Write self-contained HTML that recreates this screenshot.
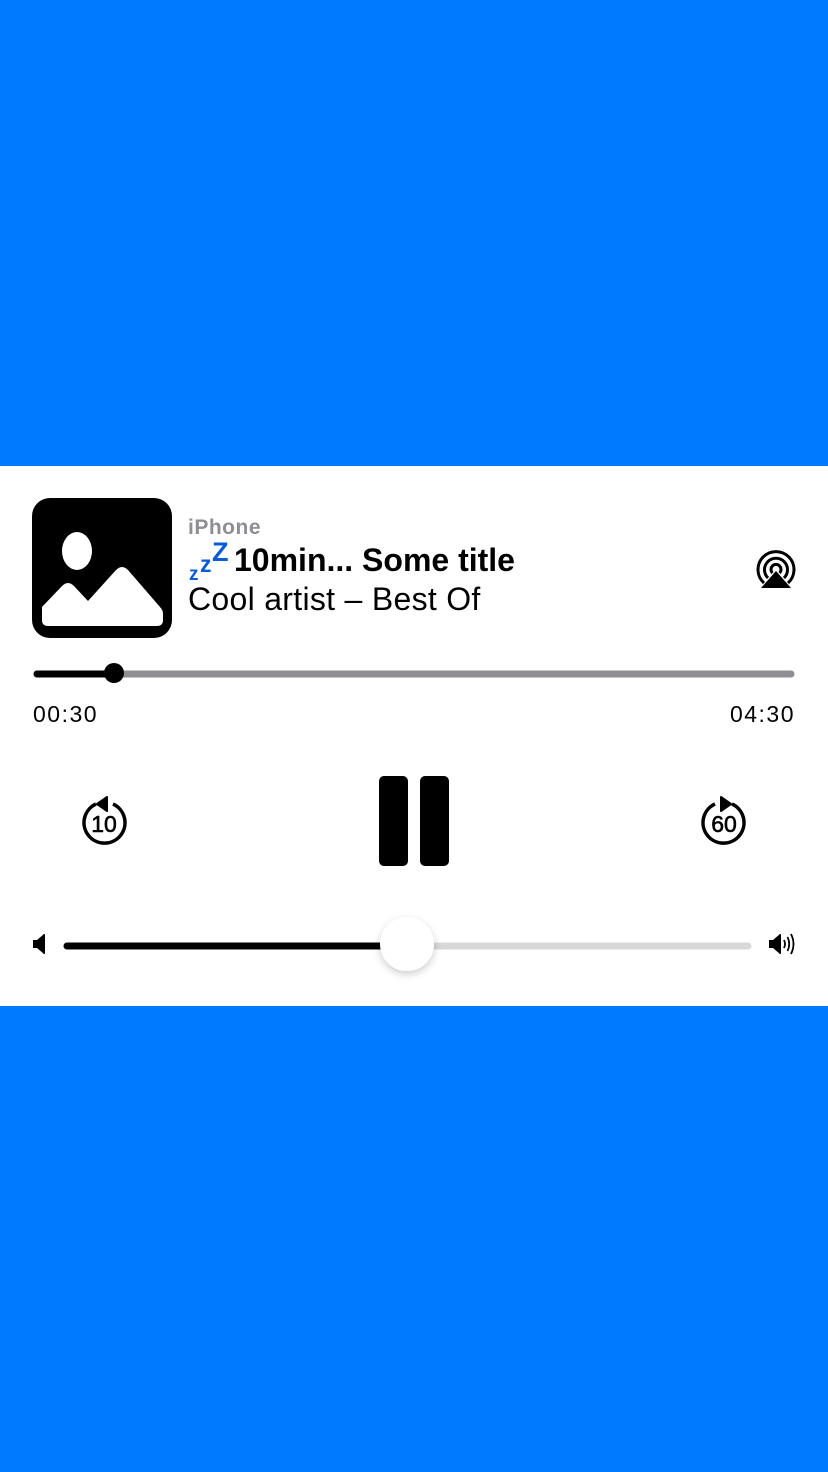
<!DOCTYPE html>
<html><head><meta charset="utf-8"><style>
html,body{margin:0;padding:0}
body{width:828px;height:1472px;background:#007aff;position:relative;overflow:hidden;font-family:"Liberation Sans",sans-serif}
.card{position:absolute;left:0;top:466px;width:828px;height:540px;background:#fff}
.t{position:absolute;white-space:nowrap}
</style></head><body>
<div class="card"></div>
<svg width="828" height="1472" style="position:absolute;left:0;top:0">
  <rect x="32" y="498" width="140" height="140" rx="18" fill="#000"/>
  <ellipse cx="77" cy="551" rx="15" ry="19" fill="#fff"/>
  <path d="M42 607 L62 586 Q68 580 74 586 L88 601 L116 570 Q122 564 128 570 L160 607 Q163 610 163 614 L163 620 Q163 626 157 626 L48 626 Q42 626 42 620 Z" fill="#fff"/>
  <g fill="none" stroke="#000" stroke-width="3">
    <path d="M764 583 A18 18 0 1 1 788 583"/>
    <path d="M768 578 A11.5 11.5 0 1 1 784 578"/>
    <path d="M772.5 573 A5 5 0 1 1 779.5 573"/>
  </g>
  <path d="M776 571 L791 588 L761 588 Z" fill="#000"/>
  <line x1="37" y1="674" x2="791" y2="674" stroke="#8e8e93" stroke-width="7" stroke-linecap="round"/>
  <line x1="37" y1="674" x2="114" y2="674" stroke="#000" stroke-width="7" stroke-linecap="round"/>
  <circle cx="114" cy="673" r="10" fill="#000"/>
  <rect x="379" y="776" width="29" height="90" rx="5" fill="#000"/>
  <rect x="420" y="776" width="29" height="90" rx="5" fill="#000"/>
  <path d="M96 804 A20.5 20.5 0 1 0 113 804" fill="none" stroke="#000" stroke-width="3.5"/>
  <path d="M107 797 L97 804 L107 811 Z" fill="#000" stroke="#000" stroke-width="2" stroke-linejoin="round"/>
  <text x="104" y="832" font-size="23" text-anchor="middle" font-family="Liberation Sans" fill="#000" stroke="#000" stroke-width="0.6">10</text>
  <path d="M732 804 A20.5 20.5 0 1 1 715 804" fill="none" stroke="#000" stroke-width="3.5"/>
  <path d="M721 797 L731 804 L721 811 Z" fill="#000" stroke="#000" stroke-width="2" stroke-linejoin="round"/>
  <text x="724" y="832" font-size="23" text-anchor="middle" font-family="Liberation Sans" fill="#000" stroke="#000" stroke-width="0.6">60</text>
  <path d="M33 940 L37 940 L44 934 L45 934 L45 954 L44 954 L37 948 L33 948 Z" fill="#000"/>
  <path d="M769 940 L773 940 L780 934 L781 934 L781 954 L780 954 L773 948 L769 948 Z" fill="#000"/>
  <g fill="none" stroke="#000" stroke-width="1.8">
    <path d="M784 940 Q786 944 784 948"/>
    <path d="M787.5 937 Q791 944 787.5 951"/>
    <path d="M791 934 Q796 944 791 954"/>
  </g>
  <line x1="67" y1="946" x2="748" y2="946" stroke="#d8d8d8" stroke-width="7" stroke-linecap="round"/>
  <line x1="67" y1="946" x2="407" y2="946" stroke="#000" stroke-width="7" stroke-linecap="round"/>
  <defs><filter id="sh" x="-50%" y="-50%" width="200%" height="200%"><feDropShadow dx="0" dy="3" stdDeviation="4" flood-color="#000" flood-opacity="0.2"/></filter></defs>
  <circle cx="407" cy="944" r="27" fill="#fff" filter="url(#sh)"/>
  <g fill="#0a5bd6" font-family="Liberation Sans" font-weight="bold">
    <text x="189" y="580" font-size="19">z</text>
    <text x="200" y="572" font-size="23">z</text>
    <text x="212" y="561" font-size="27">Z</text>
  </g>
</svg>
<div class="t" style="left:234px;top:542px;font-size:32px;font-weight:bold;color:#000;letter-spacing:0px">10min... Some title</div>
<div class="t" style="left:188px;top:581px;font-size:32px;color:#000;letter-spacing:0.3px">Cool artist – Best Of</div>
<div class="t" style="left:188px;top:516px;font-size:21px;font-weight:bold;color:#8e8e93;letter-spacing:0.5px">iPhone</div>
<div class="t" style="left:33px;top:701px;font-size:23px;color:#000;letter-spacing:1.5px">00:30</div>
<div class="t" style="right:33px;top:701px;font-size:23px;color:#000;letter-spacing:1.5px">04:30</div>
</body></html>
